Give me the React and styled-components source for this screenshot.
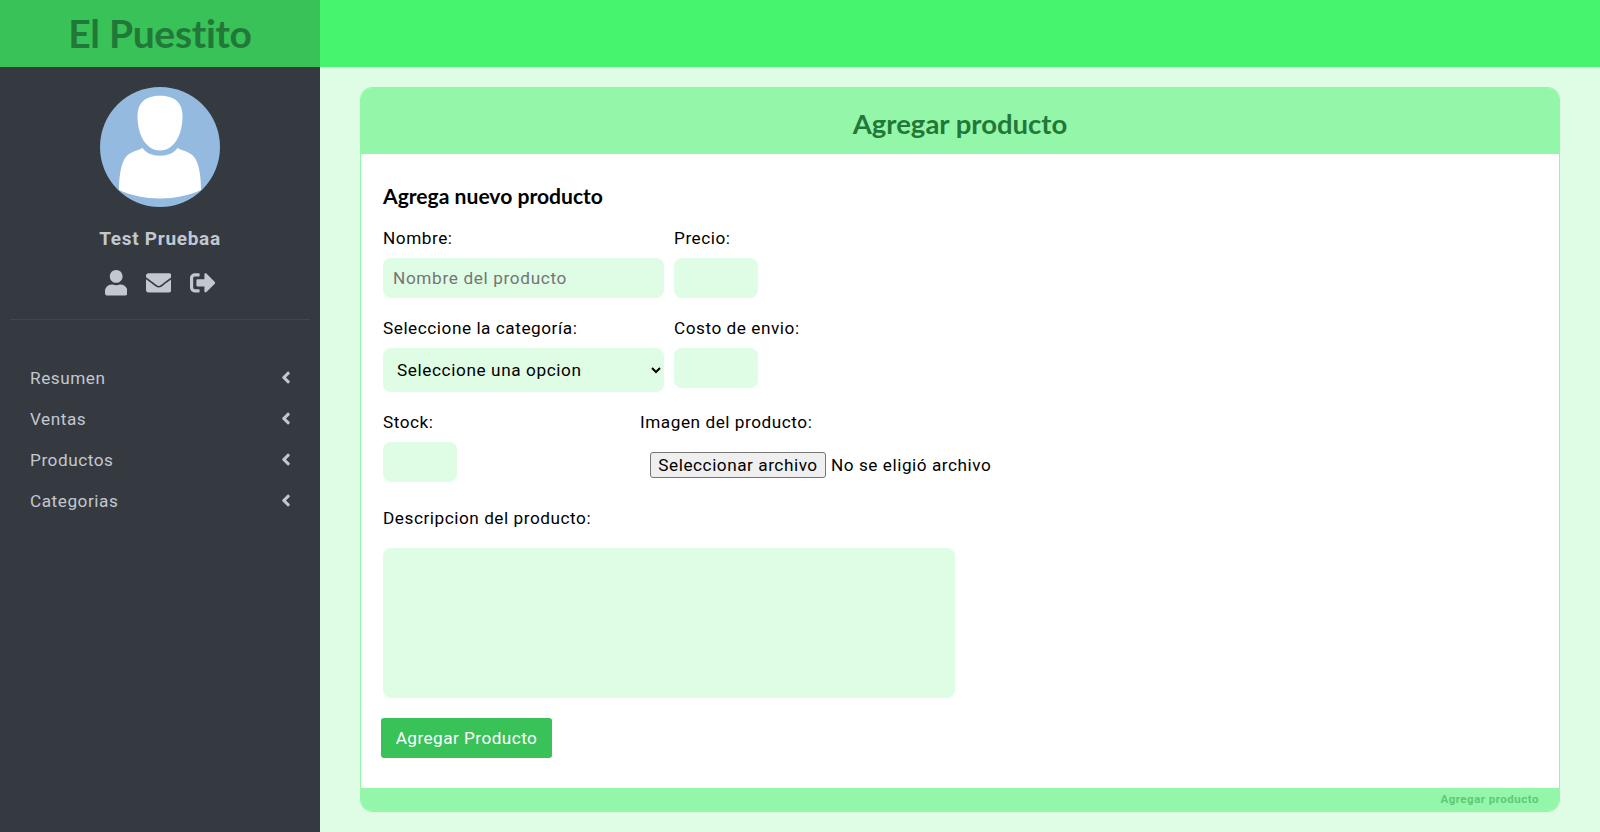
import React from "react";
import styled, { createGlobalStyle } from "styled-components";
import { FaAngleLeft, FaUser, FaEnvelope, FaSignOutAlt } from "react-icons/fa";

const GlobalStyle = createGlobalStyle`
  *, *::before, *::after { box-sizing: border-box; }
  body {
    margin: 0;
    font-family: Roboto, "Liberation Sans", sans-serif;
    font-size: 17.2px;
    letter-spacing: 0.54px;
    line-height: 24px;
    color: #000;
    background: #dffce4;
  }
  h1, h2, h3, p { margin: 0; font-weight: 700; }
`;

const Page = styled.div`
  display: grid;
  grid-template-columns: 320px 1fr;
  grid-template-rows: 67px 765px;
  height: 832px;
  overflow: hidden;
`;

const Brand = styled.div`
  background: #38c257;
  display: flex;
  align-items: center;
  justify-content: center;
  padding-bottom: 2px;
`;

const BrandName = styled.h1`
  font: 700 39px/48px Lato, sans-serif;
  letter-spacing: -0.3px;
  font-variant-ligatures: none;
  color: #217838;
`;

const TopBar = styled.header`
  background: #45f56e;
`;

const Sidebar = styled.aside`
  background: #353a40;
  color: #c2c7d0;
  display: flex;
  flex-direction: column;
  padding: 20px 10px 0;
`;

const Profile = styled.section`
  display: flex;
  flex-direction: column;
  align-items: center;
  height: 233px;
  border-bottom: 1px solid #454545;
`;

const Avatar = styled.svg`
  width: 120px;
  height: 120px;
  border-radius: 50%;
`;

const UserName = styled.p`
  margin-top: 20px;
  font-size: 19px;
  letter-spacing: 0.7px;
`;

const UserActions = styled.nav`
  display: flex;
  align-items: center;
  gap: 18.5px;
  margin-top: 19px;
  height: 26px;
  svg { display: block; height: 25.6px; width: 25.6px; }
  svg:first-child { width: 22.4px; }
`;

const Menu = styled.nav`
  padding: 37px 20px 0;
`;

const MenuItem = styled.a`
  display: flex;
  justify-content: space-between;
  align-items: center;
  height: 41px;
  svg { width: 10px; height: 19px; margin: -1px -1px 0 0; }
`;

const Main = styled.main`
  padding: 20px 40px;
`;

const Card = styled.section`
  height: 725px;
  display: flex;
  flex-direction: column;
  border: 1px solid #94f6a8;
  border-radius: 12px;
  overflow: hidden;
  background: #fff;
`;

const CardHeader = styled.header`
  height: 66px;
  padding-top: 6px;
  display: flex;
  align-items: center;
  justify-content: center;
  background: #94f6a8;
`;

const CardTitle = styled.h2`
  font: 700 27.500px/34px Lato, sans-serif;
  letter-spacing: 0;
  color: #217838;
`;

const CardFooter = styled.footer`
  height: 23px;
  padding-right: 20px;
  background: #94f6a8;
  color: #5fc878;
  font-size: 11.5px;
  font-weight: 700;
  letter-spacing: 0.5px;
  line-height: 22px;
  text-align: right;
`;

const Form = styled.form`
  flex: 1;
  padding: 28px 22px 0;
`;

const FormTitle = styled.h3`
  font: 700 21.100px/27px Lato, sans-serif;
  letter-spacing: 0;
`;

const FormRow = styled.div`
  display: flex;
  align-items: flex-start;
  gap: 10px;
  height: ${(p) => p.$height}px;
`;

const Field = styled.label`
  display: flex;
  flex-direction: column;
  gap: ${(p) => p.$gap || 8}px;
  width: ${(p) => p.$width}px;
  white-space: nowrap;
`;

const Input = styled.input`
  width: ${(p) => p.$width}px;
  height: 40px;
  padding: 0 10px;
  border: 0;
  border-radius: 8px;
  background: #dffce4;
  font: inherit;
  letter-spacing: 0.65px;
  &::placeholder { color: #757575; }
`;

const Select = styled.select`
  width: 281px;
  height: 44px;
  padding: 0 0 0 10px;
  border: 0;
  border-radius: 8px;
  background: #dffce4;
  color: #000;
  font: inherit;
  letter-spacing: 0.6px;
`;

const FilePicker = styled.div`
  display: flex;
  align-items: center;
  gap: 5px;
  padding: 10px;
`;

const FileButton = styled.button`
  width: 176px;
  height: 26px;
  padding: 0;
  border: 1px solid #767676;
  border-radius: 3px;
  background: #efefef;
  color: #000;
  font: inherit;
  letter-spacing: inherit;
`;

const TextArea = styled.textarea`
  width: 572px;
  height: 150px;
  border: 0;
  border-radius: 8px;
  background: #dffce4;
  resize: none;
`;

const SubmitButton = styled.button`
  width: 171px;
  height: 40px;
  margin-left: -2px;
  padding: 0;
  border: 0;
  border-radius: 3px;
  background: #38c257;
  color: #fff;
  font: inherit;
  letter-spacing: 0.45px;
`;

const menuItems = ["Resumen", "Ventas", "Productos", "Categorias"];

export default function App() {
  return (
    <>
      <GlobalStyle />
      <Page>
        <Brand>
          <BrandName>El Puestito</BrandName>
        </Brand>
        <TopBar />
        <Sidebar>
          <Profile>
            <Avatar viewBox="0 0 120 120">
              <rect width="120" height="120" fill="#95badf" />
              <path
                fill="#fff"
                d="M60 8.7C74 8.7 82.500 15 82.500 29C82.500 48 74 63.500 60 63.500S37.500 48 37.500 29C37.500 15 46 8.700 60 8.700Z"
              />
              <path
                fill="#fff"
                d="M42.500 61C46 66 52 68.700 60 68.700S74 66 77.500 61C84 64.500 91 64.500 95.500 72C99.500 79 101 91 101 103C89 108.500 75 111.500 60 111.500S31 108.500 19 103C19 91 20.500 79 24.500 72C29 64.500 36 64.500 42.500 61Z"
              />
            </Avatar>
            <UserName>Test Pruebaa</UserName>
            <UserActions>
              <FaUser />
              <FaEnvelope />
              <FaSignOutAlt />
            </UserActions>
          </Profile>
          <Menu>
            {menuItems.map((label) => (
              <MenuItem key={label}>
                {label}
                <FaAngleLeft />
              </MenuItem>
            ))}
          </Menu>
        </Sidebar>
        <Main>
          <Card>
            <CardHeader>
              <CardTitle>Agregar producto</CardTitle>
            </CardHeader>
            <Form>
              <FormRow $height={44}>
                <FormTitle>Agrega nuevo producto</FormTitle>
              </FormRow>
              <FormRow $height={90}>
                <Field $width={281}>
                  Nombre:
                  <Input $width={281} placeholder="Nombre del producto" />
                </Field>
                <Field $width={84}>
                  Precio:
                  <Input $width={84} />
                </Field>
              </FormRow>
              <FormRow $height={94}>
                <Field $width={281}>
                  Seleccione la categoría:
                  <Select>
                    <option>Seleccione una opcion</option>
                  </Select>
                </Field>
                <Field $width={84}>
                  Costo de envio:
                  <Input $width={84} />
                </Field>
              </FormRow>
              <FormRow $height={96}>
                <Field $width={247}>
                  Stock:
                  <Input $width={74} />
                </Field>
                <Field as="div">
                  Imagen del producto:
                  <FilePicker>
                    <FileButton type="button">Seleccionar archivo</FileButton>
                    <span>No se eligió archivo</span>
                  </FilePicker>
                </Field>
              </FormRow>
              <FormRow $height={212}>
                <Field $width={572} $gap={18}>
                  Descripcion del producto:
                  <TextArea />
                </Field>
              </FormRow>
              <SubmitButton type="button">Agregar Producto</SubmitButton>
            </Form>
            <CardFooter>Agregar producto</CardFooter>
          </Card>
        </Main>
      </Page>
    </>
  );
}
